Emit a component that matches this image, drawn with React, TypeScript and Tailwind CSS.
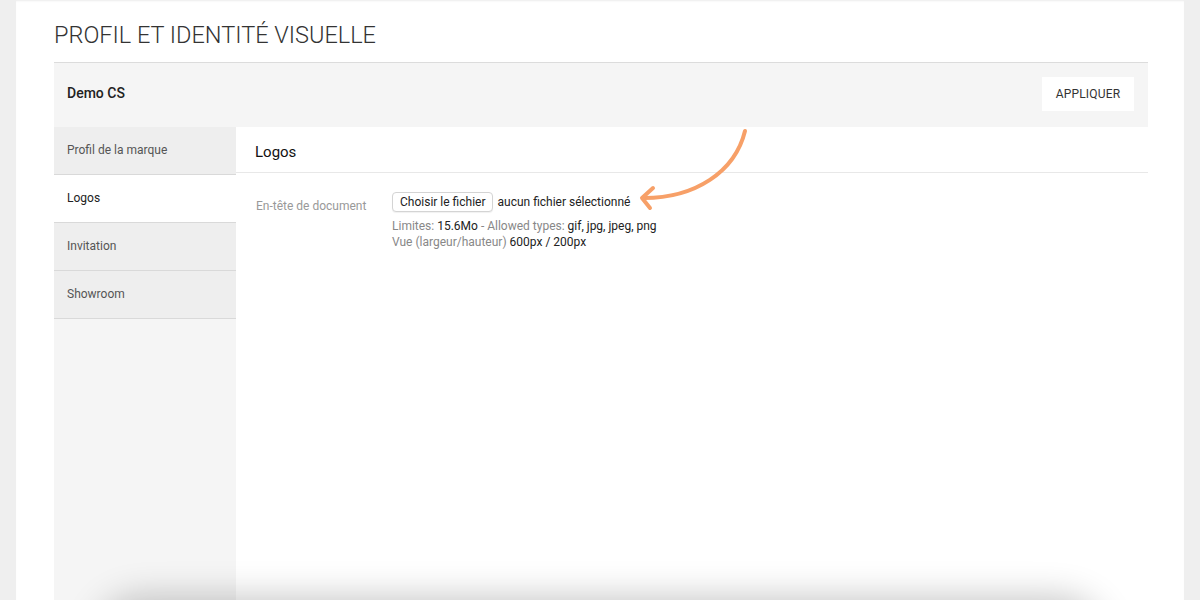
import React from 'react';

const menu = ['Profil de la marque', 'Logos', 'Invitation', 'Showroom'];

const App: React.FC = () => {
  const active = 'Logos';

  return (
    <div className="relative h-[600px] overflow-hidden bg-[#efefef] px-4" style={{ fontFamily: 'Roboto, "Liberation Sans", sans-serif' }}>
      <div className="h-full bg-white pl-[38px] pr-[36px] shadow-[inset_0_2px_2px_-1px_rgba(0,0,0,0.08)]">
        {/* Title */}
        <div className="flex h-[62px] items-center pt-[10px]">
          <h1 className="text-[23.5px] font-light text-[#333]">PROFIL ET IDENTITÉ VISUELLE</h1>
        </div>

        {/* Header bar */}
        <div className="flex h-[65px] items-center justify-between border-t border-[#dcdcdc] bg-[#f5f5f5] pb-[4px] pl-[13px] pr-[14px]">
          <span className="text-[14px] font-medium text-[#222]">Demo CS</span>
          <button className="mt-[2px] h-[34px] w-[92px] bg-white text-[12px] tracking-[0.2px] text-[#333]">APPLIQUER</button>
        </div>

        {/* Body */}
        <div className="flex h-[473px]">
          <div className="w-[182px] shrink-0 bg-[#f5f5f5]">
            {menu.map((m) => (
              <div
                key={m}
                className={`flex h-[48px] items-center border-b border-[#d9d9d9] pb-[2px] pl-[13px] text-[12px] ${
                  m === active ? 'bg-white text-[#222]' : 'bg-[#eeeeee] text-[#555]'
                }`}
              >
                {m}
              </div>
            ))}
          </div>

          <div className="relative flex-1 bg-white">
            <div className="flex h-[46px] items-center border-b border-[#e8e8e8] pl-[19px] pt-[6px]">
              <h2 className="text-[15px] text-[#111]">Logos</h2>
            </div>

            <div className="flex pl-[20px] pt-[19px]">
              <div className="w-[136px] pt-[5px] text-[12px] text-[#999]">En-tête de document</div>
              <div>
                <div className="flex items-center">
                  <button className="h-[20px] rounded-[4px] border border-[#d4d4d4] bg-white px-[7px] text-[12px] text-[#222] shadow-[0_1px_1px_rgba(0,0,0,0.06)]">
                    Choisir le fichier
                  </button>
                  <span className="ml-[4px] text-[12px] text-[#222]">aucun fichier sélectionné</span>
                </div>
                <div className="mt-[6px] text-[12px] leading-[16px]">
                  <div>
                    <span className="text-[#888]">Limites: </span>
                    <span className="text-[#222]">15.6Mo</span>
                    <span className="text-[#888]"> - Allowed types: </span>
                    <span className="text-[#222]">gif, jpg, jpeg, png</span>
                  </div>
                  <div>
                    <span className="text-[#888]">Vue (largeur/hauteur) </span>
                    <span className="text-[#222]">600px / 200px</span>
                  </div>
                </div>
              </div>
            </div>
          </div>
        </div>
      </div>

      {/* Annotation arrow */}
      <svg className="pointer-events-none absolute left-0 top-0" width="1200" height="600">
        <path d="M745 131 C 735 172, 695 198, 644 198" fill="none" stroke="#f7a068" strokeWidth="4" strokeLinecap="round" />
        <path d="M653 188 L642 198 L650 208" fill="none" stroke="#f7a068" strokeWidth="4" strokeLinecap="round" strokeLinejoin="round" />
      </svg>

      {/* Floating element shadow at bottom */}
      <div className="pointer-events-none absolute left-[110px] right-[110px] top-[610px] h-[60px] rounded-[30px] bg-white shadow-[0_0_36px_12px_rgba(0,0,0,0.24)]" />
    </div>
  );
};

export default App;
